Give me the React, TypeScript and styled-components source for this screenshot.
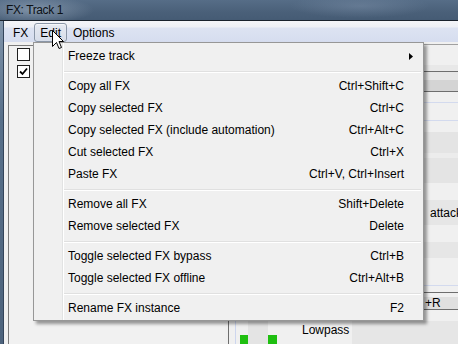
import React from "react";
import styled, { createGlobalStyle } from "styled-components";

const GlobalStyle = createGlobalStyle`
  html, body {
    margin: 0;
    padding: 0;
    width: 458px;
    height: 344px;
    overflow: hidden;
    background: #f0f0f0;
  }
  body {
    font-family: "Liberation Sans", Arial, sans-serif;
    font-size: 12px;
    color: #000;
  }
`;

const Window = styled.div`
  position: relative;
  width: 458px;
  height: 344px;
  display: flex;
  flex-direction: column;
  overflow: hidden;
`;

const TitleBar = styled.div`
  height: 20px;
  flex-shrink: 0;
  display: flex;
  align-items: center;
  padding-left: 6px;
  color: #0c1116;
  font-size: 12px;
  letter-spacing: -0.4px;
  border-bottom: 1px solid #1a222c;
  background:
    radial-gradient(ellipse 60px 14px at 34px 10px, rgba(170, 186, 204, 0.55), transparent),
    radial-gradient(ellipse 70px 12px at 360px 6px, rgba(120, 140, 165, 0.5), transparent),
    linear-gradient(180deg, #566d87 0%, #4a6079 60%, #455b74 100%);
`;

const Body = styled.div`
  flex: 1;
  display: flex;
  min-height: 0;
`;

const Frame = styled.div`
  width: 3px;
  background: linear-gradient(180deg, #8195ab 0%, #58708a 30%, #4d637c 100%);
  border-right: 1px solid #33445a;
`;

const Client = styled.div`
  flex: 1;
  display: flex;
  flex-direction: column;
  background: #f0f0f0;
  min-width: 0;
`;

const MenuBar = styled.div`
  height: 21px;
  flex-shrink: 0;
  display: flex;
  align-items: center;
  padding-left: 3px;
  background: linear-gradient(180deg, #f4f5f8 0px, #eef0f5 6px, #dde3f2 7px, #d6ddef 100%);
`;

const BarItem = styled.div<{ $active?: boolean }>`
  height: 17px;
  display: flex;
  align-items: center;
  padding: 0 5px;
  border: 1px solid ${p => (p.$active ? "#8b97a8" : "transparent")};
  border-radius: 3px;
  background: ${p => (p.$active ? "linear-gradient(180deg, #e6eaf2 0%, #d7dde9 100%)" : "none")};
  box-shadow: ${p => (p.$active ? "inset 0 1px 1px rgba(255,255,255,0.7)" : "none")};
  margin-top: 2px;
`;

const Content = styled.div`
  flex: 1;
  display: flex;
  gap: 3px;
  padding: 2px 0 0 4px;
  min-height: 0;
`;

const FxList = styled.div`
  width: 216px;
  margin-top: 1px;
  border-left: 1px solid #7c7c7c;
  border-top: 1px solid #7c7c7c;
  background: #f1f1f1;
`;

const FxRow = styled.div`
  height: 17px;
  display: flex;
  align-items: flex-start;
  padding: 2px 0 0 8px;
  box-sizing: border-box;
`;

const CheckBox = styled.div`
  width: 13px;
  height: 13px;
  box-sizing: border-box;
  border: 1px solid #1f1f1f;
  background: #fff;
  display: flex;
  align-items: center;
  justify-content: center;
`;

const ParamPanel = styled.div`
  flex: 1;
  display: flex;
  flex-direction: column;
  border-left: 1px solid #6e6e6e;
  border-top: 1px solid #a0a0a0;
  min-width: 0;
  overflow: hidden;
`;

const Band = styled.div<{ $h: number; $bg: string; $pad: number }>`
  height: ${p => p.$h}px;
  flex-shrink: 0;
  background: ${p => p.$bg};
  display: flex;
  align-items: center;
  padding-left: ${p => p.$pad}px;
  white-space: nowrap;
  overflow: hidden;
  color: #000;
`;

const FilterRow = styled.div`
  flex: 1;
  display: flex;
  align-items: stretch;
  padding-left: 6px;
`;

const GuideLine = styled.div`
  width: 1px;
  background: #cdd6ee;
  margin-right: 4px;
`;

const Meter = styled.div<{ $w: number }>`
  width: ${p => p.$w}px;
  height: 9px;
  align-self: flex-end;
  background: #1fbf10;
`;

const MeterGap = styled.div`
  width: 20px;
  background: #e4e4e4;
`;

const FilterLabel = styled.div`
  margin-left: 25px;
  line-height: 18px;
  white-space: nowrap;
`;

const FilterFill = styled.div`
  flex: 1;
  margin-left: 3px;
  background: #e6e6e6;
`;

const PopupMenu = styled.div`
  position: absolute;
  left: 33px;
  top: 42px;
  width: 391px;
  box-sizing: border-box;
  padding: 2px 2px 1px 2px;
  background: #f0f0f0;
  border: 1px solid #979797;
  box-shadow: 3px 3px 3px rgba(0, 0, 0, 0.38);

  &::before {
    content: "";
    position: absolute;
    left: 28px;
    top: 0;
    bottom: 0;
    width: 1px;
    background: #e2e3e3;
    box-shadow: 1px 0 0 #fff;
  }
`;

const MenuItem = styled.div`
  height: 22px;
  display: flex;
  align-items: center;
  padding: 0 17px 0 32px;
  white-space: nowrap;
  color: #000;
`;

const MenuLabel = styled.span`
  flex: 1;
`;

const Shortcut = styled.span`
  text-align: right;
`;

const SubArrow = styled.svg`
  margin-right: -9px;
`;

const Separator = styled.div`
  height: 8px;
  margin-left: 28px;
  display: flex;
  align-items: center;

  &::before {
    content: "";
    flex: 1;
    height: 1px;
    background: #e0e0e0;
    box-shadow: 0 1px 0 #fff;
  }
`;

const Cursor = styled.svg`
  position: absolute;
  left: 52px;
  top: 30px;
`;

type Entry = { label: string; keys?: string; sub?: boolean } | "sep";

const entries: Entry[] = [
  { label: "Freeze track", sub: true },
  "sep",
  { label: "Copy all FX", keys: "Ctrl+Shift+C" },
  { label: "Copy selected FX", keys: "Ctrl+C" },
  { label: "Copy selected FX (include automation)", keys: "Ctrl+Alt+C" },
  { label: "Cut selected FX", keys: "Ctrl+X" },
  { label: "Paste FX", keys: "Ctrl+V, Ctrl+Insert" },
  "sep",
  { label: "Remove all FX", keys: "Shift+Delete" },
  { label: "Remove selected FX", keys: "Delete" },
  "sep",
  { label: "Toggle selected FX bypass", keys: "Ctrl+B" },
  { label: "Toggle selected FX offline", keys: "Ctrl+Alt+B" },
  "sep",
  { label: "Rename FX instance", keys: "F2" },
];

// rows of the parameter list; only the right edge shows past the menu
const bands: [number, string, string?, number?][] = [
  [20, "#f0f0f0"],
  [6, "#e8e8e8"],
  [1, "#6e6e6e"],
  [8, "#e6e6e6"],
  [11, "#d4d4d4"],
  [1, "#6e6e6e"],
  [10, "#f0f0f0"],
  [1, "#d3daee"],
  [17, "#f0f0f0"],
  [1, "#d3daee"],
  [11, "#f0f0f0"],
  [21, "#e4e4e4"],
  [5, "#ececec"],
  [25, "#e4e4e4"],
  [17, "#f0f0f0"],
  [25, "#e6e6e6", "attack", 201],
  [17, "#f0f0f0"],
  [16, "#e6e6e6"],
  [27, "#f0f0f0"],
  [1, "#d3daee"],
  [6, "#f0f0f0"],
  [1, "#6e6e6e"],
  [4, "#f0f0f0"],
  [12, "#e0e0e0", "+R", 196],
  [1, "#6e6e6e"],
  [11, "#f0f0f0"],
];

const Check = () => (
  <svg width="9" height="9" viewBox="0 0 9 9">
    <path d="M1 4.5 L3.5 7 L8 1.5" fill="none" stroke="#000" strokeWidth="1.8" />
  </svg>
);

export default function App() {
  return (
    <>
      <GlobalStyle />
      <Window>
        <TitleBar>FX: Track 1</TitleBar>
        <Body>
          <Frame />
          <Client>
            <MenuBar>
              <BarItem>FX</BarItem>
              <BarItem $active>Edit</BarItem>
              <BarItem>Options</BarItem>
            </MenuBar>
            <Content>
              <FxList>
                <FxRow>
                  <CheckBox />
                </FxRow>
                <FxRow>
                  <CheckBox>
                    <Check />
                  </CheckBox>
                </FxRow>
              </FxList>
              <ParamPanel>
                {bands.map(([h, bg, text, pad], i) => (
                  <Band key={i} $h={h} $bg={bg} $pad={pad ?? 0}>
                    {text}
                  </Band>
                ))}
                <FilterRow>
                  <GuideLine />
                  <Meter $w={8} />
                  <MeterGap />
                  <Meter $w={9} />
                  <FilterLabel>Lowpass</FilterLabel>
                  <FilterFill />
                </FilterRow>
              </ParamPanel>
            </Content>
          </Client>
        </Body>

        <PopupMenu>
          {entries.map((e, i) =>
            e === "sep" ? (
              <Separator key={i} />
            ) : (
              <MenuItem key={i}>
                <MenuLabel>{e.label}</MenuLabel>
                {e.keys && <Shortcut>{e.keys}</Shortcut>}
                {e.sub && (
                  <SubArrow width="4" height="7" viewBox="0 0 4 7">
                    <path d="M0 0 L4 3.5 L0 7 Z" fill="#000" />
                  </SubArrow>
                )}
              </MenuItem>
            )
          )}
        </PopupMenu>

        <Cursor width="13" height="20" viewBox="0 0 13 20">
          <path
            d="M0.5 0.5 V16.5 L4.5 12.5 L7 18.5 L9.5 17.5 L7 11.5 H11.5 Z"
            fill="#fff"
            stroke="#000"
            strokeWidth="1"
            strokeLinejoin="miter"
          />
        </Cursor>
      </Window>
    </>
  );
}
